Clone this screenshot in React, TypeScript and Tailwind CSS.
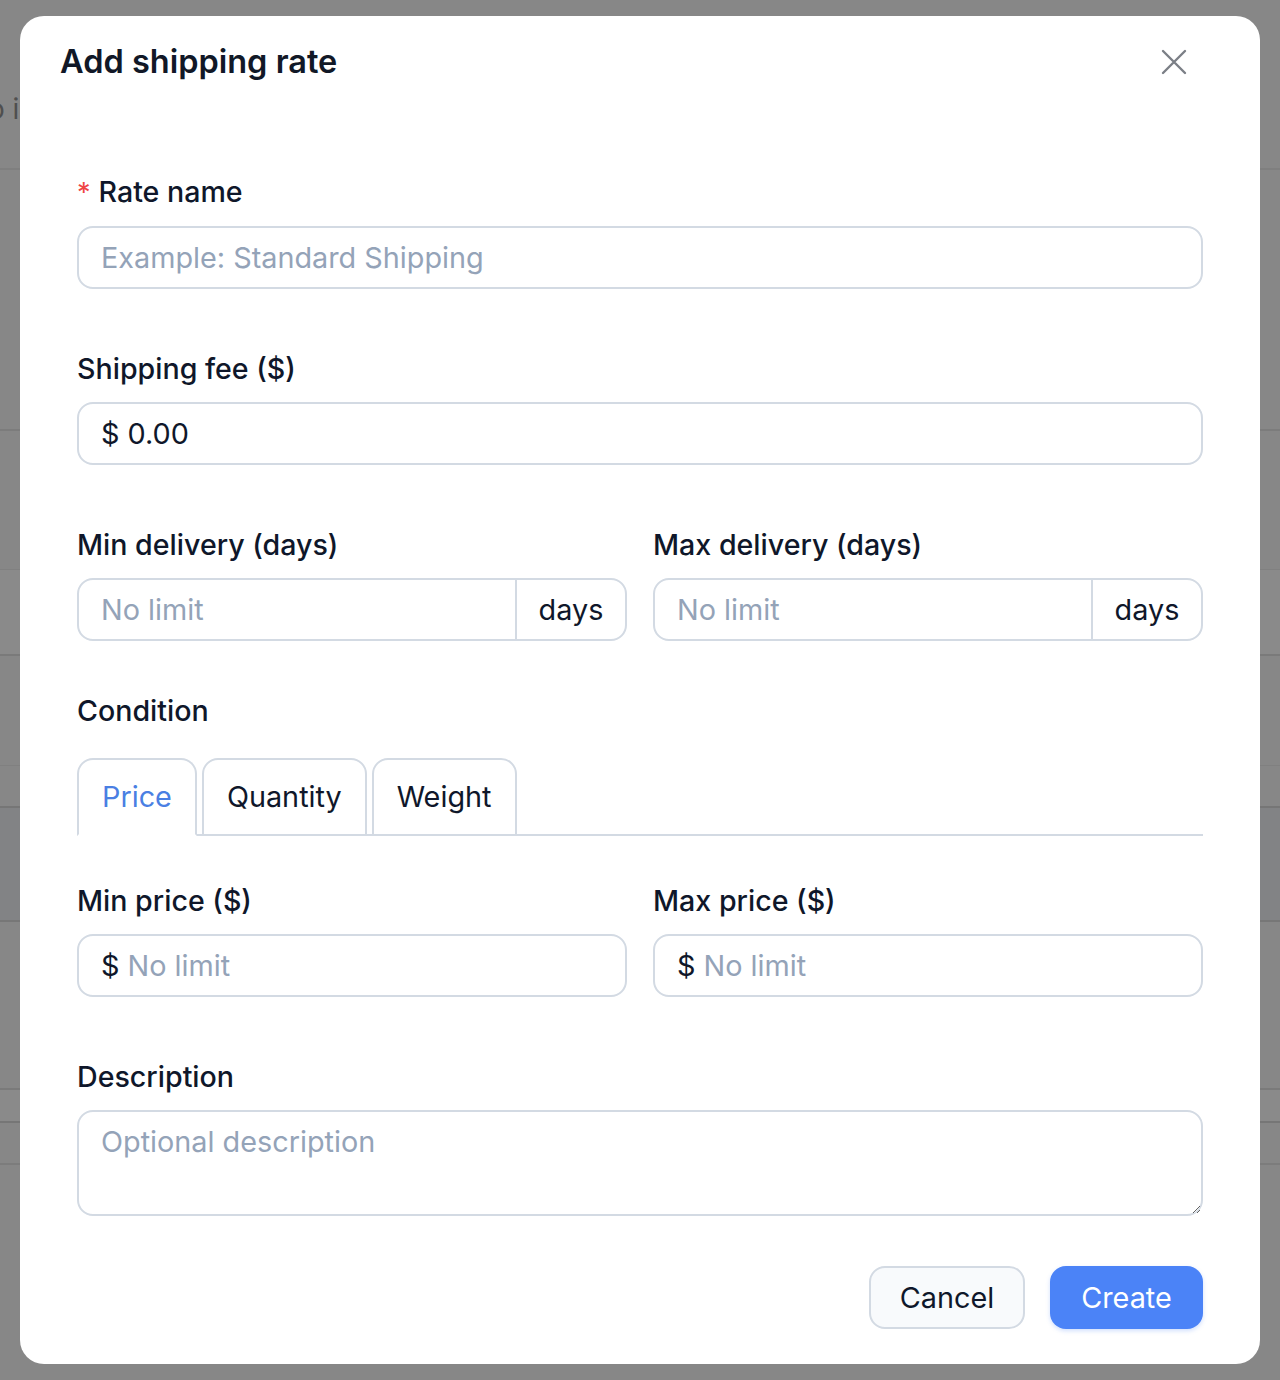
import React from "react";

const labelCls = "block text-[28.6px] leading-[40px] font-medium text-[#0f172a]";
const boxCls = "flex h-[63px] items-center rounded-[16px] border-2 border-[#d3dae3] bg-white";
const inputCls =
  "h-full w-full min-w-0 bg-transparent text-[28.8px] text-[#0f172a] outline-none placeholder:text-[#94a3b8]";

function Field({ label, required, children }: { label: string; required?: boolean; children: React.ReactNode }) {
  return (
    <div>
      <label className={labelCls}>
        {required ? <span className="mr-[8px] align-[0px] text-[27px] font-normal text-[#ef4444]">*</span> : null}
        {label}
      </label>
      <div className="mt-[13px]">{children}</div>
    </div>
  );
}

function DaysInput() {
  return (
    <div className={boxCls}>
      <input className={inputCls + " pl-[22px]"} placeholder="No limit" />
      <span className="flex h-full w-[110px] shrink-0 items-center justify-center border-l-2 border-[#d3dae3] text-[28.8px] text-[#0f172a]">
        days
      </span>
    </div>
  );
}

function MoneyInput({ value, placeholder }: { value?: string; placeholder?: string }) {
  return (
    <div className={boxCls + " pl-[22px]"}>
      <span className="mr-[8px] text-[28.8px] text-[#0f172a]">$</span>
      <input className={inputCls} defaultValue={value} placeholder={placeholder} />
    </div>
  );
}

function CloseIcon() {
  return (
    <svg width="28" height="28" viewBox="0 0 28 28" fill="none" stroke="#7b7f86" strokeWidth="2.4" strokeLinecap="round">
      <path d="M3 3L25 25M25 3L3 25" />
    </svg>
  );
}

const tabs = ["Price", "Quantity", "Weight"];

export default function App() {
  return (
    <div className="relative h-[1380px] w-full overflow-hidden bg-[#878787] font-[Inter,sans-serif]">
      {/* page behind the overlay */}
      <div aria-hidden className="flex flex-col">
        <div className="h-[170px] border-b-2 border-[#7f7f7f] pt-[88px]">
          <span className="-ml-[21px] text-[28px] text-[#4f4f4f]">to info</span>
        </div>
        <div className="h-[261px] border-b-2 border-[#7c7c7c]" />
        <div className="h-[139px] border-b border-[#808080]" />
        <div className="h-[86px] border-b-2 border-[#7a7a7a] bg-[#8a8a8a]" />
        <div className="h-[110px] border-b border-[#808080]" />
        <div className="h-[42px] border-b-2 border-[#767676]" />
        <div className="h-[114px] border-b-2 border-[#777777] bg-[#828385]" />
        <div className="h-[168px] border-b-2 border-[#7a7a7a]" />
        <div className="h-[33px] border-b-2 border-[#767676] bg-[#8a8a8a]" />
        <div className="h-[42px] border-b-2 border-[#7c7c7c]" />
      </div>

      <div className="absolute inset-0 flex justify-center pt-[16px]">
        <div className="flex h-[1348px] w-[1240px] flex-col rounded-[24px] bg-white">
          <div className="flex items-center justify-between pt-[22px] pr-[62px] pl-[40px]">
            <h2 className="text-[32.5px] leading-[48px] font-semibold text-[#111827]">Add shipping rate</h2>
            <button className="flex h-12 w-12 items-center justify-center">
              <CloseIcon />
            </button>
          </div>

          <div className="flex flex-col px-[57px] pt-[86px]">
            <Field label="Rate name" required>
              <div className={boxCls}>
                <input className={inputCls + " px-[22px]"} placeholder="Example: Standard Shipping" />
              </div>
            </Field>

            <div className="mt-[60px]">
              <Field label="Shipping fee ($)">
                <MoneyInput value="0.00" />
              </Field>
            </div>

            <div className="mt-[60px] grid grid-cols-2 gap-[26px]">
              <Field label="Min delivery (days)">
                <DaysInput />
              </Field>
              <Field label="Max delivery (days)">
                <DaysInput />
              </Field>
            </div>

            <div className="mt-[50px]">
              <div className={labelCls}>Condition</div>
              <div className="mt-[27px] flex gap-[5px] border-b-2 border-[#d3dae3]">
                {tabs.map((t, i) => (
                  <button
                    key={t}
                    className={
                      "-mb-[2px] h-[78px] rounded-t-[16px] border-2 px-[23px] text-[28.8px] " +
                      (i === 0
                        ? "border-[#d3dae3] border-b-white text-[#4a7fe3]"
                        : "border-[#d3dae3] text-[#0f172a]")
                    }
                  >
                    {t}
                  </button>
                ))}
              </div>
            </div>

            <div className="mt-[45px] grid grid-cols-2 gap-[26px]">
              <Field label="Min price ($)">
                <MoneyInput placeholder="No limit" />
              </Field>
              <Field label="Max price ($)">
                <MoneyInput placeholder="No limit" />
              </Field>
            </div>

            <div className="mt-[60px]">
              <Field label="Description">
                <textarea
                  className="block h-[106px] w-full rounded-[16px] border-2 border-[#d3dae3] px-[22px] pt-[10px] text-[28.8px] leading-[40px] text-[#0f172a] outline-none placeholder:text-[#94a3b8]"
                  placeholder="Optional description"
                />
              </Field>
            </div>

            <div className="mt-[50px] flex justify-end gap-[25px]">
              <button className="h-[63px] w-[156px] rounded-[16px] border-2 border-[#d3dae3] bg-[#f8fafc] text-[28.8px] text-[#0f172a]">
                Cancel
              </button>
              <button className="h-[63px] w-[153px] rounded-[16px] bg-[#4b83f7] text-[28.8px] text-white shadow-[0_2px_4px_rgba(75,131,247,0.25)]">
                Create
              </button>
            </div>
          </div>
        </div>
      </div>
    </div>
  );
}
